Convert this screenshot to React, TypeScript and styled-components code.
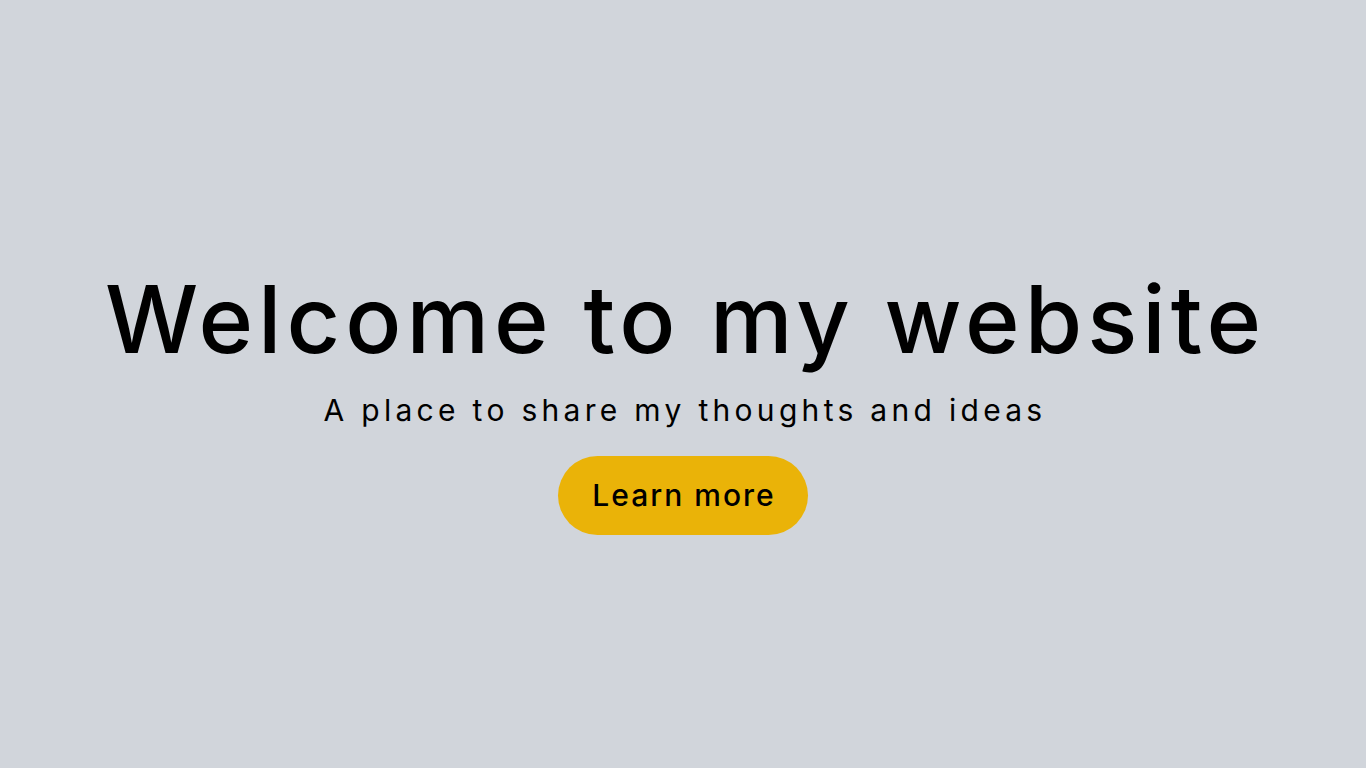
import React from "react";
import styled, { createGlobalStyle } from "styled-components";

const GlobalStyle = createGlobalStyle`
  html, body {
    margin: 0;
    padding: 0;
    background-color: #d1d5db;
    font-family: "Inter", "Open Sans", sans-serif;
  }
`;

const Hero = styled.main`
  box-sizing: border-box;
  min-height: 768px;
  padding-top: 40px;
  display: flex;
  flex-direction: column;
  align-items: center;
  justify-content: center;
  color: #000;
`;

const Title = styled.h1`
  margin: 0;
  padding-left: 5px;
  font-size: 93px;
  font-weight: 500;
  line-height: 1;
  letter-spacing: 5px;
`;

const Subtitle = styled.p`
  margin: 26px 0 28px;
  padding-left: 4px;
  font-size: 30px;
  font-weight: 400;
  line-height: 36px;
  letter-spacing: 4.3px;
`;

const Button = styled.button`
  border: none;
  border-radius: 40px;
  background-color: #eab308;
  color: #000;
  font-family: inherit;
  font-size: 30px;
  font-weight: 500;
  line-height: 37px;
  letter-spacing: 2px;
  padding: 21px 32px 21px 34px;
  cursor: pointer;
`;

const App: React.FC = () => {
  return (
    <>
      <GlobalStyle />
      <Hero>
        <Title>Welcome to my website</Title>
        <Subtitle>A place to share my thoughts and ideas</Subtitle>
        <Button>Learn more</Button>
      </Hero>
    </>
  );
};

export default App;
